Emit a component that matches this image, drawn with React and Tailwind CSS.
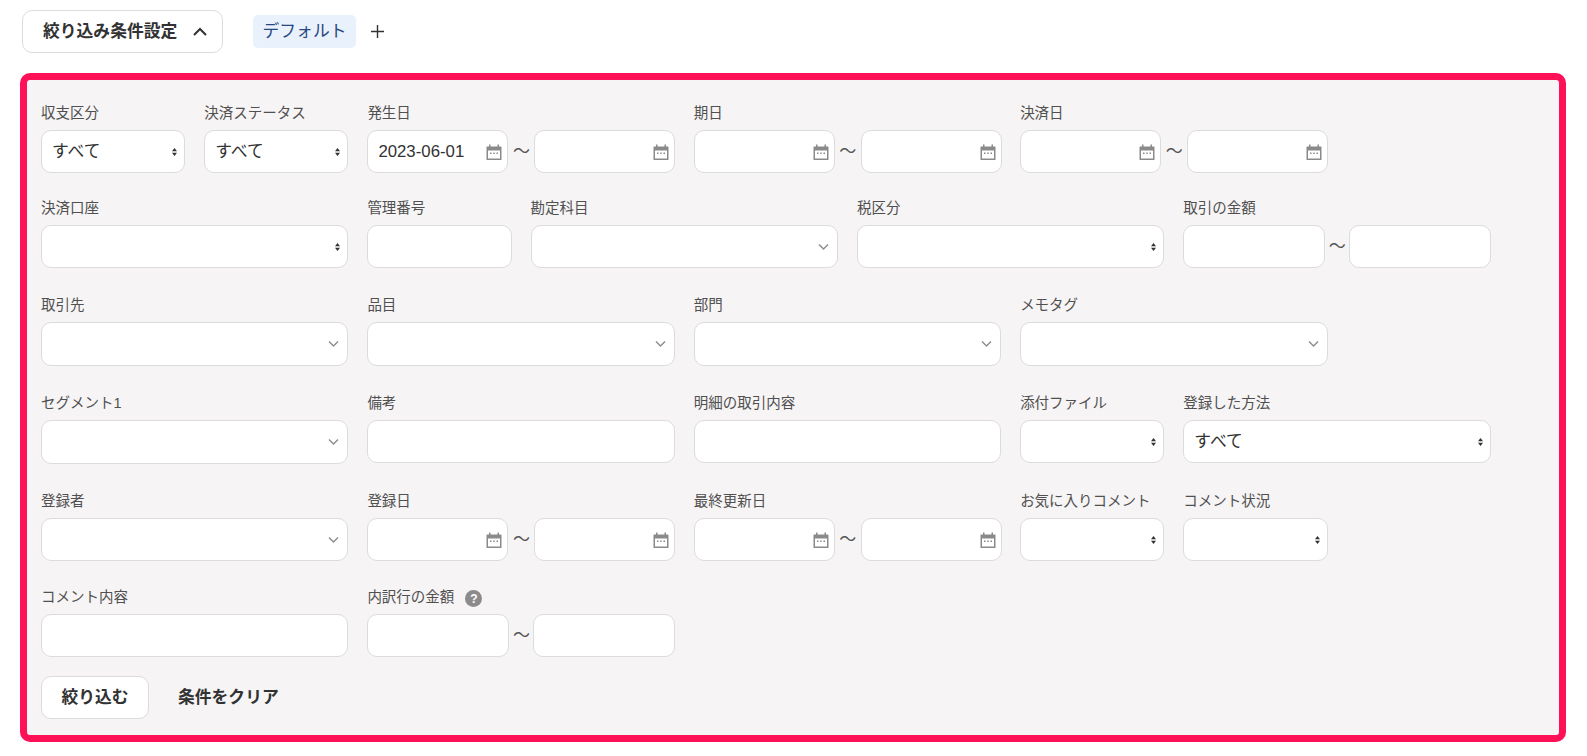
import React from 'react';

const FONT = 'font-["Liberation_Sans","Noto_Sans_CJK_JP",sans-serif]';
const BOX = 'w-full rounded-[10px] border border-[#dcdcdc] bg-white outline-none text-[16.8px] text-[#323232]';
const ROW = 'grid grid-cols-[repeat(9,144.2px)] gap-x-[19px]';

function Label({ children, hint }) {
  return (
    <div className="flex h-5 mb-[7px] items-center text-[14.5px] leading-5 text-[#505050] whitespace-nowrap">
      {children}
      {hint && (
        <span className="ml-[11px] mt-[3px] flex h-[17px] w-[17px] items-center justify-center rounded-full bg-[#8c8a8a] text-[12px] font-bold text-white">?</span>
      )}
    </div>
  );
}

function CalendarIcon() {
  return (
    <svg className="absolute right-[6px] top-1/2 -translate-y-1/2" width="16" height="18" viewBox="0 0 16 18">
      <path d="M1 3.5h14a.5.5 0 0 1 .5.5v12.5a.5.5 0 0 1-.5.5H1a.5.5 0 0 1-.5-.5V4a.5.5 0 0 1 .5-.5z" fill="#8a8a8a" />
      <rect x="3" y="1.5" width="1.5" height="3" fill="#8a8a8a" />
      <rect x="11.5" y="1.5" width="1.5" height="3" fill="#8a8a8a" />
      <rect x="2" y="7.5" width="12" height="8" fill="#fff" />
      <rect x="4" y="9.5" width="1.5" height="1.5" fill="#8a8a8a" />
      <rect x="7.25" y="9.5" width="1.5" height="1.5" fill="#8a8a8a" />
      <rect x="10.5" y="9.5" width="1.5" height="1.5" fill="#8a8a8a" />
    </svg>
  );
}

function TextBox() {
  return <input readOnly className={`${BOX} h-[43px] px-[9px]`} />;
}

function DateBox({ value = '' }) {
  return (
    <div className="relative w-full">
      <input readOnly value={value} className={`${BOX} h-[43px] pl-[10px] pr-[24px]`} />
      <CalendarIcon />
    </div>
  );
}

// 標準のセレクト（上下の小さい三角）
function NativeSelect({ value = '' }) {
  return (
    <div className="relative w-full">
      <select className={`${BOX} h-[43px] appearance-none pl-[10px] pr-6`} defaultValue={value}>
        <option value={value}>{value}</option>
      </select>
      <svg className="absolute right-[8px] top-1/2 -translate-y-1/2" width="5" height="9" viewBox="0 0 5 9">
        <path d="M2.5 0.5L5 3.8H0zM2.5 8.5L0 5.2h5z" fill="#333" />
      </svg>
    </div>
  );
}

// 検索付きコンボボックス（シェブロン）
function ComboBox({ h = 'h-[44px]' }) {
  return (
    <div className="relative w-full">
      <input readOnly className={`${BOX} ${h} px-[9px]`} />
      <svg className="absolute right-[9px] top-1/2 -translate-y-1/2" width="11" height="7" viewBox="0 0 11 7">
        <path d="M1 1l4.5 4.5L10 1" fill="none" stroke="#8f8f8f" strokeWidth="1.5" />
      </svg>
    </div>
  );
}

function Range({ left, right, w = 'grid-cols-[141px_26px_141px]' }) {
  return (
    <div className={`grid ${w}`}>
      {left}
      <span className="flex h-[43px] items-center justify-center text-[17px] text-[#555]">～</span>
      {right}
    </div>
  );
}

const MONEY = 'grid-cols-[142px_24px_142px]';

function Field({ label, hint, className = 'col-span-2', children }) {
  return (
    <div className={className}>
      <Label hint={hint}>{label}</Label>
      {children}
    </div>
  );
}

export default function App() {
  return (
    <div className={`${FONT} h-[756px] w-[1587px] overflow-hidden bg-white`}>
      {/* header */}
      <div className="flex items-center pl-[22px] pt-[10px]">
        <button className="flex h-[43px] w-[201px] items-center rounded-[10px] border border-[#dcdcdc] bg-white pl-[20px] text-[16.8px] font-bold text-[#323232]">
          絞り込み条件設定
          <svg className="ml-[16px]" width="14" height="9" viewBox="0 0 14 9">
            <path d="M1 8l6-6 6 6" fill="none" stroke="#323232" strokeWidth="2" />
          </svg>
        </button>
        <span className="ml-[30px] flex h-[33px] w-[103px] items-center justify-center rounded-[5px] bg-[#e9f1fc] text-[16.8px] text-[#26477f]">デフォルト</span>
        <svg className="ml-[14px]" width="15" height="15" viewBox="0 0 15 15">
          <path d="M7.5 1v13M1 7.5h13" stroke="#333" strokeWidth="1.4" />
        </svg>
      </div>

      {/* panel */}
      <div className="ml-[20px] mt-[20px] h-[669px] w-[1546px] rounded-[10px] border-[7px] border-[#ff1158] bg-[#f6f4f5] pl-[14px] pt-[23px]">
        <div className={ROW}>
          <Field label="収支区分" className="col-span-1"><NativeSelect value="すべて" /></Field>
          <Field label="決済ステータス" className="col-span-1"><NativeSelect value="すべて" /></Field>
          <Field label="発生日"><Range left={<DateBox value="2023-06-01" />} right={<DateBox />} /></Field>
          <Field label="期日"><Range left={<DateBox />} right={<DateBox />} /></Field>
          <Field label="決済日"><Range left={<DateBox />} right={<DateBox />} /></Field>
        </div>

        <div className={`mt-[25px] ${ROW}`}>
          <Field label="決済口座"><NativeSelect /></Field>
          <Field label="管理番号" className="col-span-1"><TextBox /></Field>
          <Field label="勘定科目"><ComboBox h="h-[43px]" /></Field>
          <Field label="税区分"><NativeSelect /></Field>
          <Field label="取引の金額"><Range w={MONEY} left={<TextBox />} right={<TextBox />} /></Field>
        </div>

        <div className={`mt-[27px] ${ROW}`}>
          <Field label="取引先"><ComboBox /></Field>
          <Field label="品目"><ComboBox /></Field>
          <Field label="部門"><ComboBox /></Field>
          <Field label="メモタグ"><ComboBox /></Field>
        </div>

        <div className={`mt-[27px] ${ROW}`}>
          <Field label="セグメント1"><ComboBox /></Field>
          <Field label="備考"><TextBox /></Field>
          <Field label="明細の取引内容"><TextBox /></Field>
          <Field label="添付ファイル" className="col-span-1"><NativeSelect /></Field>
          <Field label="登録した方法"><NativeSelect value="すべて" /></Field>
        </div>

        <div className={`mt-[27px] ${ROW}`}>
          <Field label="登録者"><ComboBox h="h-[43px]" /></Field>
          <Field label="登録日"><Range left={<DateBox />} right={<DateBox />} /></Field>
          <Field label="最終更新日"><Range left={<DateBox />} right={<DateBox />} /></Field>
          <Field label="お気に入りコメント" className="col-span-1"><NativeSelect /></Field>
          <Field label="コメント状況" className="col-span-1"><NativeSelect /></Field>
        </div>

        <div className={`mt-[26px] ${ROW}`}>
          <Field label="コメント内容"><TextBox /></Field>
          <Field label="内訳行の金額" hint><Range w={MONEY} left={<TextBox />} right={<TextBox />} /></Field>
        </div>

        <div className="mt-[19px] flex items-center">
          <button className="h-[43px] w-[108px] rounded-[10px] border border-[#dcdcdc] bg-white text-[16.8px] font-bold text-[#323232]">絞り込む</button>
          <button className="ml-[29px] text-[16.8px] font-bold text-[#323232]">条件をクリア</button>
        </div>
      </div>
    </div>
  );
}
